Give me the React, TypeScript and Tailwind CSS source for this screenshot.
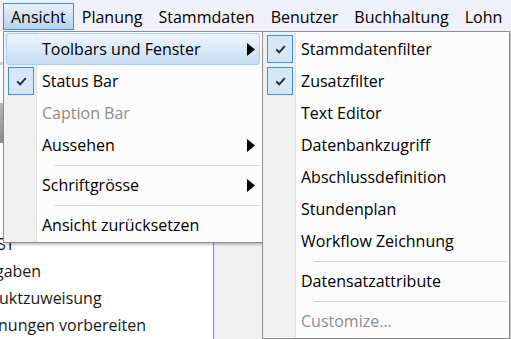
import React from "react";

type Item =
  | { kind: "sep" }
  | {
      kind: "item";
      label: string;
      checked?: boolean;
      disabled?: boolean;
      sub?: boolean;
      active?: boolean;
    };

const Check = () => (
  <svg width="11" height="9" viewBox="0 0 11 9" className="block">
    <path
      d="M1.2 4.4 L4.2 7.3 L9.8 1.2"
      fill="none"
      stroke="#2a2a2a"
      strokeWidth="1.9"
    />
  </svg>
);

const Arrow = () => (
  <svg width="8" height="13" viewBox="0 0 8 13" className="block">
    <polygon points="0,0 8,6.5 0,13" fill="#000" />
  </svg>
);

const MenuRows = ({ items }: { items: Item[] }) => (
  <>
    {items.map((it, i) =>
      it.kind === "sep" ? (
        <div key={i} className="h-[8px] flex items-center ml-[51px] mr-[2px]">
          <div className="h-px w-full bg-[#d3d3d3]" />
        </div>
      ) : (
        <div
          key={i}
          className={
            "h-[32px] mx-[2px] pl-[2px] pr-[4px] flex items-center rounded-[3px] border " +
            (it.active
              ? "border-[#a6cdf1] bg-gradient-to-b from-[#eef5fd] to-[#c5ddf5]"
              : "border-transparent")
          }
        >
          {it.checked ? (
            <div className="w-[26px] h-[28px] -ml-px border border-[#3d8fe0] bg-[#d5e7f8] flex items-center justify-center">
              <Check />
            </div>
          ) : (
            <div className="w-[26px] h-[28px] -ml-px" />
          )}
          <span
            className={
              "ml-[8px] flex-1 whitespace-nowrap " +
              (it.disabled ? "text-[#8c8c8c]" : "text-black")
            }
          >
            {it.label}
          </span>
          {it.sub && <Arrow />}
        </div>
      )
    )}
  </>
);

const mainMenu: Item[] = [
  { kind: "item", label: "Toolbars und Fenster", sub: true, active: true },
  { kind: "item", label: "Status Bar", checked: true },
  { kind: "item", label: "Caption Bar", disabled: true },
  { kind: "item", label: "Aussehen", sub: true },
  { kind: "sep" },
  { kind: "item", label: "Schriftgrösse", sub: true },
  { kind: "sep" },
  { kind: "item", label: "Ansicht zurücksetzen" },
];

const subMenu: Item[] = [
  { kind: "item", label: "Stammdatenfilter", checked: true },
  { kind: "item", label: "Zusatzfilter", checked: true },
  { kind: "item", label: "Text Editor" },
  { kind: "item", label: "Datenbankzugriff" },
  { kind: "item", label: "Abschlussdefinition" },
  { kind: "item", label: "Stundenplan" },
  { kind: "item", label: "Workflow Zeichnung" },
  { kind: "sep" },
  { kind: "item", label: "Datensatzattribute" },
  { kind: "sep" },
  { kind: "item", label: "Customize...", disabled: true },
];

const menuBar = ["Ansicht", "Planung", "Stammdaten", "Benutzer", "Buchhaltung", "Lohn"];

export default function App() {
  return (
    <div className="relative w-[511px] h-[339px] overflow-hidden flex flex-col bg-[#f0f0f0] font-['Open_Sans',sans-serif] text-[16px] leading-none">
      {/* menubar */}
      <div className="h-[31px] bg-[#eff0fa] flex items-start pt-[3px] pl-[3px]">
        {menuBar.map((m, i) => (
          <div
            key={m}
            className={
              "h-[27px] px-[7px] flex items-center border text-black " +
              (i === 0
                ? "border-[#3b8de0] bg-gradient-to-b from-[#e7f0fa] to-[#b8d2ed]"
                : "border-transparent")
            }
          >
            {m}
          </div>
        ))}
      </div>

      {/* body */}
      <div className="flex flex-1 min-h-0">
        <div className="w-[214px] bg-white border-r border-[#9a9a9a] flex flex-col overflow-hidden">
          <div className="h-[31px]" />
          <div className="h-[3px] bg-[#cccccc]" />
          <div className="h-[38px]" />
          <div className="h-[40px] bg-gradient-to-b from-[#b4b4b4] to-[#8a8a8a]" />
          <div className="h-[87px]" />
          <div className="h-[27px] flex items-center -ml-[3px] whitespace-nowrap text-[#1a1a1a]">ST</div>
          <div className="h-[27px] flex items-center -ml-[5px] whitespace-nowrap text-[#1a1a1a]">gaben</div>
          <div className="h-[27px] flex items-center -ml-[1px] whitespace-nowrap text-[#1a1a1a]">uktzuweisung</div>
          <div className="h-[27px] flex items-center -ml-[2px] whitespace-nowrap text-[#1a1a1a]">nungen vorbereiten</div>
        </div>
        <div className="flex-1 border-l border-[#e4e4f6] bg-[#f0f0f0]" />
      </div>

      {/* dropdown: Ansicht */}
      <div className="absolute left-[3px] top-[31px] w-[260px] h-[212px] pt-px border border-[#8e8e8e] shadow-[2px_2px_2px_rgba(0,0,0,0.22)] bg-[linear-gradient(to_right,#f0f0f0_32px,#e0e0e0_32px,#e0e0e0_33px,#fcfcfc_33px)]">
        <MenuRows items={mainMenu} />
      </div>

      {/* submenu: Toolbars und Fenster */}
      <div className="absolute left-[262px] top-[31px] w-[248px] h-[308px] pt-px border border-[#8e8e8e] shadow-[2px_2px_2px_rgba(0,0,0,0.22)] bg-[linear-gradient(to_right,#f0f0f0_32px,#e0e0e0_32px,#e0e0e0_33px,#fcfcfc_33px)]">
        <MenuRows items={subMenu} />
      </div>
    </div>
  );
}
